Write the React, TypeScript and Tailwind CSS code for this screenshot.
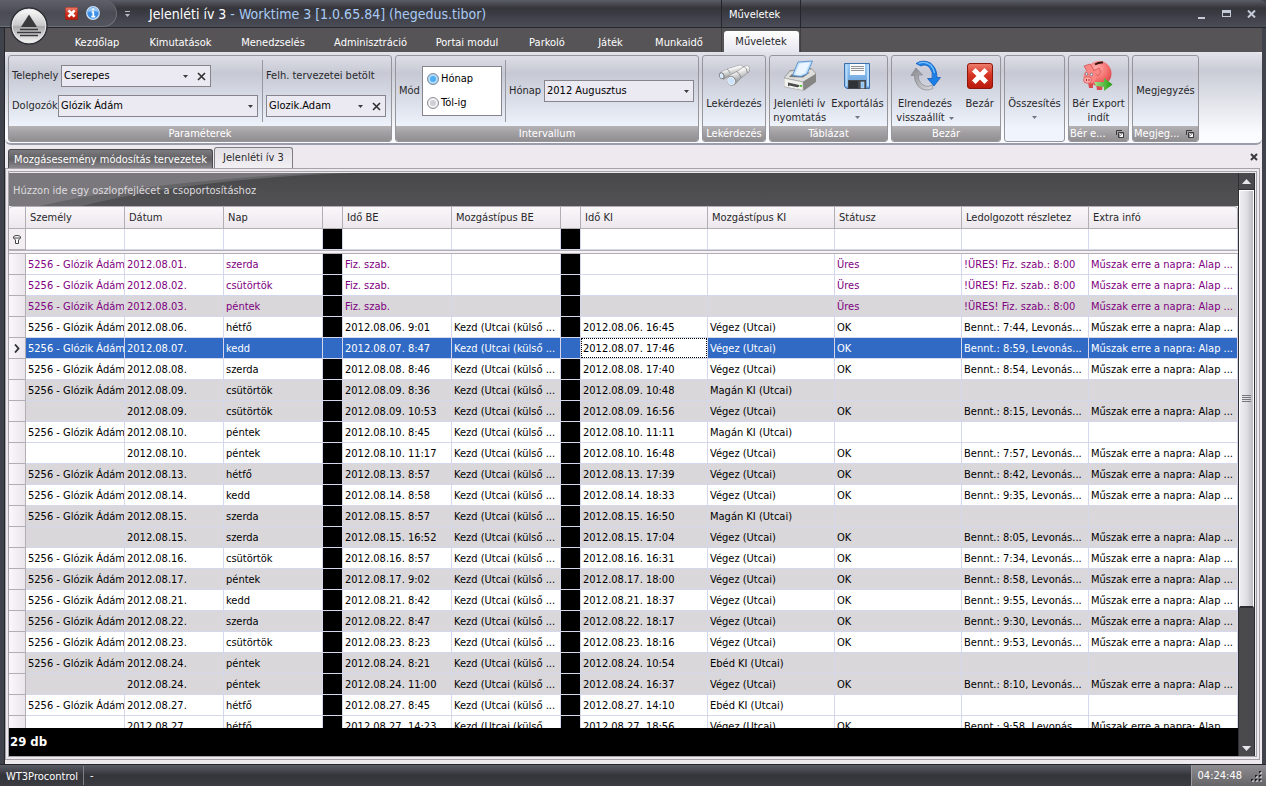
import React, { useState } from "react";
import clsx from "clsx";

type Row = {
  person?: string;
  date: string;
  day: string;
  inTime: string;
  inType?: string;
  outTime?: string;
  outType?: string;
  status?: string;
  worked?: string;
  extra?: string;
  shaded?: boolean;
  empty?: boolean;
};

const person = "5256 - Glózik Ádám";
const kezd = "Kezd (Utcai (külső ...";
const vegez = "Végez (Utcai)";
const muszak = "Műszak erre a napra: Alap ...";

const emptyRow = (date: string, day: string, shaded = false): Row => ({
  person,
  date,
  day,
  inTime: "Fiz. szab.",
  status: "Üres",
  worked: "!ÜRES! Fiz. szab.: 8:00",
  extra: muszak,
  shaded,
  empty: true,
});

const workRow = (
  date: string,
  day: string,
  start: string,
  end: string,
  worked: string,
  shaded = false,
  name = person
): Row => ({
  person: name,
  date,
  day,
  inTime: `${date} ${start}`,
  inType: kezd,
  outTime: `${date} ${end}`,
  outType: vegez,
  status: "OK",
  worked: `Bennt.: ${worked}, Levonás...`,
  extra: muszak,
  shaded,
});

const breakRow = (
  date: string,
  day: string,
  start: string,
  end: string,
  outType: string,
  shaded = false
): Row => ({
  person,
  date,
  day,
  inTime: `${date} ${start}`,
  inType: kezd,
  outTime: `${date} ${end}`,
  outType,
  shaded,
});

const rows: Row[] = [
  emptyRow("2012.08.01.", "szerda"),
  emptyRow("2012.08.02.", "csütörtök"),
  emptyRow("2012.08.03.", "péntek", true),
  workRow("2012.08.06.", "hétfő", "9:01", "16:45", "7:44"),
  workRow("2012.08.07.", "kedd", "8:47", "17:46", "8:59"),
  workRow("2012.08.08.", "szerda", "8:46", "17:40", "8:54"),
  breakRow("2012.08.09.", "csütörtök", "8:36", "10:48", "Magán KI (Utcai)", true),
  workRow("2012.08.09.", "csütörtök", "10:53", "16:56", "8:15", true, ""),
  breakRow("2012.08.10.", "péntek", "8:45", "11:11", "Magán KI (Utcai)"),
  workRow("2012.08.10.", "péntek", "11:17", "16:48", "7:57", false, ""),
  workRow("2012.08.13.", "hétfő", "8:57", "17:39", "8:42", true),
  workRow("2012.08.14.", "kedd", "8:58", "18:33", "9:35"),
  breakRow("2012.08.15.", "szerda", "8:57", "16:50", "Magán KI (Utcai)", true),
  workRow("2012.08.15.", "szerda", "16:52", "17:04", "8:05", true, ""),
  workRow("2012.08.16.", "csütörtök", "8:57", "16:31", "7:34"),
  workRow("2012.08.17.", "péntek", "9:02", "18:00", "8:58", true),
  workRow("2012.08.21.", "kedd", "8:42", "18:37", "9:55"),
  workRow("2012.08.22.", "szerda", "8:47", "18:17", "9:30", true),
  workRow("2012.08.23.", "csütörtök", "8:23", "18:16", "9:53"),
  breakRow("2012.08.24.", "péntek", "8:21", "10:54", "Ebéd KI (Utcai)", true),
  workRow("2012.08.24.", "péntek", "11:00", "16:37", "8:10", true, ""),
  breakRow("2012.08.27.", "hétfő", "8:45", "14:10", "Ebéd KI (Utcai)"),
  workRow("2012.08.27.", "hétfő", "14:23", "18:56", "9:58", false, ""),
];

const columns = [
  { key: "person", label: "Személy", width: "w-[99px]" },
  { key: "date", label: "Dátum", width: "w-[99px]" },
  { key: "day", label: "Nap", width: "w-[99px]" },
  { key: "gap1", label: "", width: "w-5" },
  { key: "inTime", label: "Idő BE", width: "w-[109px]" },
  { key: "inType", label: "Mozgástípus BE", width: "w-[109px]" },
  { key: "gap2", label: "", width: "w-5" },
  { key: "outTime", label: "Idő KI", width: "w-[127px]" },
  { key: "outType", label: "Mozgástípus KI", width: "w-[127px]" },
  { key: "status", label: "Státusz", width: "w-[127px]" },
  { key: "worked", label: "Ledolgozott részletez", width: "w-[127px]" },
  { key: "extra", label: "Extra infó", width: "" },
];

const menu = [
  { label: "Kezdőlap", width: "w-[76px]" },
  { label: "Kimutatások", width: "w-[91px]" },
  { label: "Menedzselés", width: "w-[94px]" },
  { label: "Adminisztráció", width: "w-[101px]" },
  { label: "Portai modul", width: "w-[92px]" },
  { label: "Parkoló", width: "w-[68px]" },
  { label: "Játék", width: "w-[59px]" },
  { label: "Munkaidő", width: "w-[78px]" },
];

const Caret = ({ className }: { className?: string }) => (
  <svg className={className} width="5" height="3" viewBox="0 0 5 3" aria-hidden="true">
    <path d="M0 0h5L2.500 3z" fill="currentColor" />
  </svg>
);

const Cross = ({ size = 9 }: { size?: number }) => (
  <svg width={size} height={size} viewBox="0 0 9 9" aria-hidden="true">
    <path d="M1 1l7 7M8 1L1 8" stroke="currentColor" strokeWidth="1.600" />
  </svg>
);

const RedCross = ({ size }: { size: number }) => (
  <svg width={size} height={size} viewBox="0 0 26 26" aria-hidden="true">
    <defs>
      <linearGradient id="red" x1="0" y1="0" x2="0" y2="1">
        <stop offset="0" stopColor="#ee8070" />
        <stop offset="0.450" stopColor="#d53522" />
        <stop offset="1" stopColor="#b91a0c" />
      </linearGradient>
    </defs>
    <rect x="0.500" y="0.500" width="25" height="25" rx="2.500" fill="url(#red)" stroke="#8e160c" />
    <path d="M8.500 8.500l9 9M17.500 8.500l-9 9" stroke="#fff" strokeWidth="5" strokeLinecap="square" />
  </svg>
);

const InfoIcon = () => (
  <svg width="14" height="14" viewBox="0 0 14 14" aria-hidden="true">
    <circle cx="7" cy="7" r="6.300" fill="#3d8fe6" stroke="#cfe4fa" strokeWidth="1.200" />
    <path d="M1.800 6a5.300 5.300 0 0 1 10.400 0q-5-2-10.400 0z" fill="#9ecbf7" />
    <path d="M5.500 6H7.300v4.500M5.300 10.700h4M6.300 3.300h1.800" stroke="#fff" strokeWidth="1.700" fill="none" />
  </svg>
);

const Orb = () => (
  <svg width="38" height="38" viewBox="0 0 38 38" aria-hidden="true">
    <defs>
      <linearGradient id="orb" x1="0" y1="0" x2="0" y2="1">
        <stop offset="0" stopColor="#ffffff" />
        <stop offset="0.480" stopColor="#c9c9cb" />
        <stop offset="0.520" stopColor="#a9a9ac" />
        <stop offset="1" stopColor="#fafafa" />
      </linearGradient>
    </defs>
    <circle cx="19" cy="19" r="18" fill="url(#orb)" stroke="#2f3036" strokeWidth="1.500" />
    <circle cx="19" cy="19" r="16.700" fill="none" stroke="#e9e9ea" />
    <path d="M19 7.500l8 12.500h-16z" fill="#3a3a3d" />
    <path d="M10 22.500h18M7 25.500h24M10 28.500h18" stroke="#3a3a3d" strokeWidth="1.300" />
  </svg>
);

const Binoculars = () => (
  <svg width="32" height="32" viewBox="0 0 32 32" aria-hidden="true">
    <defs>
      <linearGradient id="tube" x1="0" y1="0" x2="0.400" y2="1">
        <stop offset="0" stopColor="#a9a9aa" />
        <stop offset="0.350" stopColor="#ffffff" />
        <stop offset="0.650" stopColor="#c6c6c7" />
        <stop offset="1" stopColor="#757577" />
      </linearGradient>
    </defs>
    <path d="M2.500 12L12 8l10-3q2.500-.2 3 2l-1 3-11 4.500-7.500 5z" fill="url(#tube)" stroke="#8b8b8d" strokeWidth="0.500" />
    <path d="M11 15.500l9-4.500 7.500-5.300q3.500-.5 4.300 2.300l-.4 3.500-8.400 6.500-6.500 6.800z" fill="url(#tube)" stroke="#808082" strokeWidth="0.500" />
    <path d="M18.500 11.500q3.500 1.500 4.500 6.500M26 6.500q3 1.500 3.500 6.500M9 9q2 1 3 4" stroke="#828284" strokeWidth="0.800" fill="none" />
    <ellipse cx="13.500" cy="20.800" rx="4.400" ry="5" transform="rotate(-20 13.500 20.800)" fill="#85888c" />
    <ellipse cx="13.200" cy="21" rx="3.400" ry="4" transform="rotate(-20 13.200 21)" fill="#cbe4fb" stroke="#fff" strokeWidth="0.700" />
    <ellipse cx="3.700" cy="15.700" rx="2.700" ry="3.500" transform="rotate(-20 3.700 15.700)" fill="#7c7f83" />
    <ellipse cx="3.600" cy="15.800" rx="1.800" ry="2.500" transform="rotate(-20 3.600 15.800)" fill="#d9ecfd" />
  </svg>
);

const Printer = () => (
  <svg width="32" height="32" viewBox="0 0 32 32" aria-hidden="true">
    <path d="M0 18l6-8 21-2 5 6v8l-12 8.500L0 26z" fill="#9b9b9a" />
    <path d="M0 18l6-7 22-2 4 5-13 8z" fill="#dededc" stroke="#8c8c8b" strokeWidth="0.600" />
    <path d="M0 18l19 4v8.500L1 27q-1-.5-1-1z" fill="#f0f0ee" stroke="#a0a09f" strokeWidth="0.600" />
    <path d="M19 22l13-8v7.500l-12 9z" fill="#858584" />
    <path d="M5 17l3-3 18-1.500-7 5z" fill="#77777a" />
    <path d="M8.500 15.500L14 2l14.500-1-5.500 13-6 2.500z" fill="#bfe0fd" stroke="#4b83c6" strokeWidth="0.800" />
    <path d="M11 14.500l4.500-11L26 2.500l-5 10.500-5 2z" fill="#eaf5ff" />
    <path d="M4 22.500l11 2.500v3.500L4 26z" fill="#4b4b4b" />
    <path d="M5 26l9 2 2-1.500" stroke="#fff" strokeWidth="1.200" fill="none" />
    <rect x="15.500" y="25" width="2.500" height="1.800" fill="#55c32f" />
  </svg>
);

const Floppy = () => (
  <svg width="32" height="32" viewBox="0 0 32 32" aria-hidden="true">
    <defs>
      <linearGradient id="disk" x1="0" y1="0" x2="0" y2="1">
        <stop offset="0" stopColor="#9accf5" />
        <stop offset="1" stopColor="#6299d6" />
      </linearGradient>
    </defs>
    <path d="M3.500 3.500h25v25H5.500l-2-2z" fill="url(#disk)" stroke="#3f6fa8" />
    <path d="M4.500 4.500h2v22h-2zM26 4.500h2v22h-2z" fill="#b5dafa" />
    <rect x="9" y="4" width="15" height="11" fill="#f9fafb" />
    <path d="M10 6.500h13M10 8.500h13M10 10.500h13" stroke="#77777a" strokeWidth="0.800" />
    <rect x="7" y="20" width="18" height="9" fill="#45484e" />
    <rect x="8" y="21" width="9" height="7" fill="#2f3237" />
    <rect x="20" y="22" width="3" height="6" fill="#8bc2f5" stroke="#c8e3fb" strokeWidth="0.600" />
  </svg>
);

const Refresh = () => (
  <svg width="32" height="32" viewBox="0 0 32 32" aria-hidden="true">
    <defs>
      <linearGradient id="grayArrow" x1="0" y1="0" x2="1" y2="1">
        <stop offset="0" stopColor="#83868c" />
        <stop offset="1" stopColor="#dcdde0" />
      </linearGradient>
    </defs>
    <path d="M24 28.500Q15 32.500 9 26 5 21 5.500 15.500H2L7 8l6.500 7H9.500q-.5 6 4 9.500 5 3.500 9.500.500z" fill="url(#grayArrow)" stroke="#7d8086" strokeWidth="0.600" />
    <path d="M7 3.500Q14-1 21.500 3q6.500 5 6.500 14.500h3.500L25 26l-6.500-7.500H23q1.500-6.500-2.500-11-4-4-8.500-1.500z" fill="#1c7fe8" stroke="#0b55b5" strokeWidth="0.700" />
    <path d="M9.500 3.500q6.500-3 12 1.500 3.500 3.500 4 8" stroke="#7cc3ff" strokeWidth="1.300" fill="none" />
  </svg>
);

const Piggy = () => (
  <svg width="32" height="32" viewBox="0 0 32 32" aria-hidden="true">
    <defs>
      <radialGradient id="pig" cx="0.400" cy="0.300" r="0.800">
        <stop offset="0" stopColor="#ffb0ae" />
        <stop offset="0.600" stopColor="#f26a69" />
        <stop offset="1" stopColor="#cf3a3c" />
      </radialGradient>
      <linearGradient id="go" x1="0" y1="0" x2="1" y2="0">
        <stop offset="0" stopColor="#a5e08b" />
        <stop offset="1" stopColor="#1b9e0a" />
      </linearGradient>
    </defs>
    <path d="M6 22h5v6H7zM14 24h7l-1 6h-5zM23 22h5l-1 5h-3z" fill="#d84b4c" />
    <ellipse cx="17" cy="13.500" rx="12.500" ry="12.500" fill="url(#pig)" />
    <path d="M2 6l6-2 4 6-6 3zM11 11l6-3 2 4-3 4z" fill="#f88684" stroke="#d14a4b" strokeWidth="0.700" />
    <ellipse cx="8" cy="16.500" rx="6.500" ry="7" fill="#fb8684" />
    <ellipse cx="5.500" cy="20" rx="4" ry="3.300" fill="#ffaaa8" stroke="#d14a4b" strokeWidth="0.700" />
    <path d="M4.500 19v2M7 19v2" stroke="#b02c30" />
    <circle cx="4.500" cy="14" r="1.300" fill="#e8f1fa" stroke="#4b5566" strokeWidth="0.600" />
    <circle cx="9.500" cy="14.500" r="1.300" fill="#e8f1fa" stroke="#4b5566" strokeWidth="0.600" />
    <path d="M13 4.500q4-2.500 8-2" stroke="#3a1513" strokeWidth="2" fill="none" />
    <path d="M12 22h10v-4l8.500 6.500L22 31v-4l-8-1z" fill="url(#go)" />
  </svg>
);

const FunnelIcon = () => (
  <svg width="8" height="9" viewBox="0 0 8 9" aria-hidden="true">
    <path d="M0.500 2q0-1.500 3.500-1.500T7.500 2v1L5.500 5v3.500h-3V5L0.500 3z" fill="#fff" stroke="#444" />
    <path d="M1 3h6" stroke="#444" />
  </svg>
);

const LauncherIcon = () => (
  <svg width="8" height="8" viewBox="0 0 8 8" aria-hidden="true">
    <path d="M0.500 5V0.500H6M2.500 7V2.500H7.500V7.500H2.500z" fill="none" stroke="#3a3a3c" />
    <path d="M3.500 3.500L6.500 6.500M6.500 4v2.500H4" stroke="#fff" fill="none" />
  </svg>
);

type ComboProps = {
  id: string;
  value: string;
  width: string;
  clearable?: boolean;
};

const Combo = ({ id, value, width, clearable }: ComboProps) => (
  <div className={clsx("flex h-[22px] items-center border border-[#87858b] bg-[#ebe9f1] text-black", width)}>
    <div className="grid h-full min-w-0 flex-1 items-center">
      <select
        id={id}
        className="col-start-1 row-start-1 h-full w-full appearance-none bg-transparent pl-[2px] outline-none"
      >
        <option>{value}</option>
      </select>
      <Caret className="pointer-events-none col-start-1 row-start-1 mr-1 justify-self-end text-[#3c3c3e]" />
    </div>
    {clearable && (
      <button type="button" aria-label="Törlés" className="flex h-full w-[18px] items-center justify-center text-[#2f2f31]">
        <Cross />
      </button>
    )}
  </div>
);

type GroupProps = {
  title?: string;
  width: string;
  launcher?: boolean;
  children: React.ReactNode;
};

const Group = ({ title, width, launcher, children }: GroupProps) => (
  <section
    className={clsx(
      "flex h-[87px] shrink-0 flex-col overflow-hidden rounded-[3px] border border-[#97959c] bg-linear-to-b from-[#dddde6] from-0% via-[#c6c9d4] via-20% to-[#eff4fd] to-85%",
      width
    )}
  >
    <div className="flex flex-1 justify-center">{children}</div>
    {title && (
      <div
        className={clsx(
          "flex h-[15px] items-center bg-linear-to-b from-[#b5b2b6] via-[#a19ea2] to-[#918e92] pt-px whitespace-nowrap text-white",
          launcher ? "justify-between pr-1 pl-px" : "justify-center"
        )}
      >
        <span>{title}</span>
        {launcher && (
          <button type="button" aria-label={`${title} beállítások`}>
            <LauncherIcon />
          </button>
        )}
      </div>
    )}
  </section>
);

type BigButtonProps = {
  icon?: React.ReactNode;
  lines: string[];
  caret?: boolean;
  inlineCaret?: boolean;
};

const BigButton = ({ icon, lines, caret, inlineCaret }: BigButtonProps) => (
  <button type="button" className="flex flex-col items-center px-px pt-1 leading-[14px] whitespace-nowrap">
    <span className="flex h-8 w-8 items-center justify-center">{icon}</span>
    <span className="mt-[5px] flex flex-col items-center">
      {lines.map((line, i) => (
        <span key={line} className="flex items-center gap-1">
          {line}
          {inlineCaret && i === lines.length - 1 && <Caret className="text-[#6f7686]" />}
        </span>
      ))}
    </span>
    {caret && <Caret className="mt-[5px] text-[#6f7686]" />}
  </button>
);

const Separator = () => <div className="mt-1 h-[62px] w-px bg-[#97989f]" />;

const TitleBar = () => (
  <header className="flex h-7 shrink-0 items-stretch rounded-t-md border-b border-[#25262b] bg-linear-to-b from-[#5b5d67] via-[#35353b] via-30% to-[#4b4d57]">
    <div className="flex w-[117px] items-center gap-2 rounded-r-2xl border-r border-b border-[#6d6f79] bg-linear-to-b from-[#5f606a] via-[#4a4b53] to-[#54565f] pl-[65px]">
      <button type="button" aria-label="Bezárás">
        <RedCross size={13} />
      </button>
      <button type="button" aria-label="Információ">
        <InfoIcon />
      </button>
    </div>
    <button type="button" aria-label="Gyorselérés testreszabása" className="ml-2 flex flex-col items-center justify-center gap-[2px] text-[#b9bbc3]">
      <span className="h-px w-[5px] bg-[#b9bbc3]" />
      <Caret />
    </button>
    <h1 className="ml-[19px] w-[572px] text-[14px] leading-7 whitespace-nowrap text-[#a9cbf5]">
      <span className="text-white">Jelenléti ív 3</span> - Worktime 3 [1.0.65.84] (hegedus.tibor)
    </h1>
    <div className="w-20 border-x border-[#25262b] pl-[7px] leading-[30px] text-white">Műveletek</div>
    <div className="ml-auto flex items-center gap-[9px] pr-[7px] text-[#c5cbd8]">
      <button type="button" aria-label="Kis méret" className="flex h-3 w-4 items-end justify-center pb-px">
        <span className="h-[2px] w-[7px] bg-[#c5cbd8]" />
      </button>
      <button type="button" aria-label="Teljes méret" className="flex w-4 justify-center">
        <span className="h-[7px] w-[9px] border border-t-[3px] border-[#c5cbd8]" />
      </button>
      <button type="button" aria-label="Ablak bezárása" className="flex w-4 justify-center">
        <svg width="9" height="8" viewBox="0 0 9 8" aria-hidden="true">
          <path d="M1 0.500l7 7M8 0.500l-7 7" stroke="currentColor" strokeWidth="2" />
        </svg>
      </button>
    </div>
  </header>
);

const MenuBar = () => (
  <nav className="flex h-6 shrink-0 items-stretch bg-[#565457] pl-[54px] text-white">
    {menu.map((item) => (
      <button key={item.label} type="button" className={clsx("pt-[5px] text-center", item.width)}>
        {item.label}
      </button>
    ))}
    <div className="ml-[3px] flex w-20 justify-center border-x border-[#3f3e41]">
      <button
        type="button"
        className="mt-[3px] w-[75px] rounded-t-[3px] bg-linear-to-b from-white to-[#e6e6ef] text-[#28282a]"
      >
        Műveletek
      </button>
    </div>
  </nav>
);

const Ribbon = () => {
  const [mode, setMode] = useState("honap");

  return (
    <div className="flex h-[93px] shrink-0 items-start gap-[3px] overflow-hidden rounded-md border-b-2 border-[#9a9da9] bg-linear-to-b from-[#e3e3ec] from-0% via-[#c9ccd6] via-20% to-[#fbfcff] to-90% px-[3px] pt-[3px]">
      <Group title="Paraméterek" width="w-[384px]">
        <div className="flex flex-1 gap-[3px] px-[3px]">
          <div className="flex flex-1 flex-col gap-2 pt-[9px]">
            <div className="flex items-center">
              <label htmlFor="telephely" className="w-[49px]">Telephely</label>
              <Combo id="telephely" value="Cserepes" width="w-[150px]" clearable />
            </div>
            <div className="flex items-center">
              <label htmlFor="dolgozok" className="w-[46px] whitespace-nowrap">Dolgozók</label>
              <Combo id="dolgozok" value="Glózik Ádám" width="w-[200px]" />
            </div>
          </div>
          <Separator />
          <div className="flex w-[122px] flex-col gap-2 pt-[9px]">
            <label htmlFor="felh" className="h-[22px] leading-[22px] whitespace-nowrap">Felh. tervezetei betölt</label>
            <Combo id="felh" value="Glozik.Adam" width="w-[120px]" clearable />
          </div>
        </div>
      </Group>
      <Group title="Intervallum" width="w-[304px]">
        <div className="flex flex-1 items-start gap-[3px] pl-[3px]">
          <span className="w-5 pt-[28px]">Mód</span>
          <fieldset className="mt-[10px] flex h-[50px] w-20 flex-col justify-around border border-[#87858b] bg-white pl-1 text-black">
            {[
              { id: "honap", label: "Hónap" },
              { id: "tolig", label: "Tól-ig" },
            ].map((option) => (
              <label key={option.id} className="flex items-center gap-[2px]">
                <input
                  type="radio"
                  name="mode"
                  checked={mode === option.id}
                  onChange={() => setMode(option.id)}
                  className="h-3 w-3 appearance-none rounded-full border border-[#8f9096] bg-[#d0d0d4] ring-2 ring-[#f2f2f4] ring-inset checked:bg-[#4fb0f5] checked:ring-[#b9dcf8]"
                />
                {option.label}
              </label>
            ))}
          </fieldset>
          <Separator />
          <label htmlFor="honapvalaszto" className="w-8 pt-[28px] whitespace-nowrap">Hónap</label>
          <div className="pt-6">
            <Combo id="honapvalaszto" value="2012 Augusztus" width="w-[150px]" />
          </div>
        </div>
      </Group>
      <Group title="Lekérdezés" width="w-16">
        <BigButton icon={<Binoculars />} lines={["Lekérdezés"]} />
      </Group>
      <Group title="Táblázat" width="w-[119px]">
        <div className="flex gap-[3px]">
          <BigButton icon={<Printer />} lines={["Jelenléti ív", "nyomtatás"]} />
          <BigButton icon={<Floppy />} lines={["Exportálás"]} caret />
        </div>
      </Group>
      <Group title="Bezár" width="w-[110px]">
        <div className="flex gap-2">
          <BigButton icon={<Refresh />} lines={["Elrendezés", "visszaállít"]} inlineCaret />
          <BigButton icon={<RedCross size={26} />} lines={["Bezár"]} />
        </div>
      </Group>
      <Group width="w-[61px]">
        <BigButton lines={["Összesítés"]} caret />
      </Group>
      <Group title="Bér e..." width="w-[61px]" launcher>
        <BigButton icon={<Piggy />} lines={["Bér Export", "indít"]} />
      </Group>
      <Group title="Megjeg..." width="w-[67px]" launcher>
        <button type="button">Megjegyzés</button>
      </Group>
    </div>
  );
};

const DocumentTabs = () => (
  <div className="flex h-[23px] shrink-0 items-end pt-[2px] pl-[3px]">
    <button
      type="button"
      className="h-[19px] w-[205px] rounded-t-[3px] border border-b-0 border-[#4b4a4d] bg-linear-to-b from-[#7d7b7f] via-[#605f62] to-[#8a888c] pt-px whitespace-nowrap text-white"
    >
      Mozgásesemény módosítás tervezetek
    </button>
    <button
      type="button"
      className="ml-px h-[21px] w-[79px] rounded-t-[3px] border border-b-0 border-[#7f7d82] bg-linear-to-b from-[#e2dfe5] to-[#f3f0f4] text-[#28282a]"
    >
      Jelenléti ív 3
    </button>
    <button type="button" aria-label="Lap bezárása" className="mr-1 mb-[7px] ml-auto text-[#3a3a3c]">
      <svg width="8" height="8" viewBox="0 0 8 8" aria-hidden="true">
        <path d="M1 1l6 6M7 1L1 7" stroke="currentColor" strokeWidth="2" />
      </svg>
    </button>
  </div>
);

const GroupPanel = () => (
  <div className="relative h-[33px] shrink-0 overflow-hidden bg-linear-to-b from-[#48484a] to-[#525154] text-[#dddbdf]">
    <svg className="absolute inset-y-0 left-0" width="400" height="33" viewBox="0 0 400 33" aria-hidden="true">
      <path d="M0 0h345Q190 5 72 33H0z" fill="#656467" />
      <path d="M0 0h310Q140 8 30 33H0z" fill="#7a787c" />
    </svg>
    <p className="relative pl-1 leading-[35px]">Húzzon ide egy oszlopfejlécet a csoportosításhoz</p>
  </div>
);

const isGap = (key: string) => key === "gap1" || key === "gap2";

const Grid = () => {
  const [selected, setSelected] = useState(4);

  return (
    <table className="w-full table-fixed border-separate border-spacing-0 whitespace-nowrap">
      <colgroup>
        <col className="w-[17px]" />
        {columns.map((c) => (
          <col key={c.key} className={c.width} />
        ))}
      </colgroup>
      <thead>
        <tr className="h-[23px] bg-linear-to-b from-[#fbf8fb] to-[#ebe7ec]">
          <th className="rounded-tl border-t border-r border-b border-[#b3aeb4]" aria-label="Jelölő" />
          {columns.map((c) => (
            <th
              key={c.key}
              className="overflow-hidden border-t border-r border-b border-[#b3aeb4] p-0 pt-px pl-1 text-left font-normal text-[#28282a] last:rounded-tr"
            >
              {c.label}
            </th>
          ))}
        </tr>
        <tr className="h-[21px] bg-white">
          <td className="border-r border-b border-[#b3aeb4] bg-[#f2eef2] p-0">
            <div className="flex justify-center">
              <FunnelIcon />
            </div>
          </td>
          {columns.map((c) => (
            <td
              key={c.key}
              className={clsx("border-r border-b border-[#d5d8ec] p-0", isGap(c.key) && "bg-black")}
            >
              {!isGap(c.key) && (
                <input aria-label={`${c.label} szűrő`} className="block h-5 w-full px-[3px] outline-none" />
              )}
            </td>
          ))}
        </tr>
        <tr className="h-1">
          <td colSpan={13} className="border-y border-[#b3aeb4] bg-[#f5f2f5] p-0" />
        </tr>
      </thead>
      <tbody>
        {rows.map((row, i) => {
          const active = i === selected;
          return (
            <tr
              key={i}
              onClick={() => setSelected(i)}
              className={clsx(
                "h-[21px]",
                active ? "bg-[#316ac5] text-white" : row.shaded ? "bg-[#d9d7da]" : "bg-white",
                !active && (row.empty ? "text-[#800080]" : "text-black")
              )}
            >
              <td className="border-r border-b border-[#b3aeb4] bg-linear-to-r from-[#faf7fa] to-[#eae6eb] p-0">
                {active && (
                  <svg className="mx-auto block" width="6" height="9" viewBox="0 0 6 9" aria-hidden="true">
                    <path d="M1 0.500l3.500 4L1 8.500" stroke="#2f2f31" strokeWidth="1.800" fill="none" />
                  </svg>
                )}
              </td>
              {columns.map((c) => {
                const focused = active && c.key === "outTime";
                return (
                  <td
                    key={c.key}
                    className={clsx(
                      "overflow-hidden border-r border-b border-[#d5d8ec] p-0",
                      isGap(c.key) && !active && "bg-black"
                    )}
                  >
                    <div
                      className={clsx(
                        "h-5",
                        focused
                          ? "border border-dotted border-black bg-white pl-px leading-5 text-black"
                          : "pl-[2px] leading-[22px]"
                      )}
                    >
                      {row[c.key as keyof Row]}
                    </div>
                  </td>
                );
              })}
            </tr>
          );
        })}
      </tbody>
    </table>
  );
};

const ScrollBar = () => (
  <div className="flex w-[17px] shrink-0 flex-col border-x border-[#2f2f33] bg-[#4a494c]">
    <button type="button" aria-label="Fel" className="flex h-[17px] items-center justify-center border-b border-[#2f2f33]">
      <svg width="9" height="5" viewBox="0 0 9 5" aria-hidden="true">
        <path d="M4.500 0L9 5H0z" fill="#e6e6ea" />
      </svg>
    </button>
    <div className="flex-1">
      <div className="flex h-[76%] flex-col items-center justify-center gap-px border border-b-2 border-white border-b-[#2f2f33] bg-linear-to-r from-[#efeff2] via-[#e0dfe4] via-50% to-[#bdbcc4]">
        <span className="h-px w-[9px] bg-[#77767c]" />
        <span className="h-px w-[9px] bg-[#77767c]" />
        <span className="h-px w-[9px] bg-[#77767c]" />
        <span className="h-px w-[9px] bg-[#77767c]" />
      </div>
    </div>
    <button type="button" aria-label="Le" className="flex h-4 items-center justify-center">
      <svg width="9" height="5" viewBox="0 0 9 5" aria-hidden="true">
        <path d="M0 0h9L4.500 5z" fill="#e6e6ea" />
      </svg>
    </button>
  </div>
);

const StatusBar = () => (
  <footer className="flex h-[22px] shrink-0 items-stretch border-t border-[#25262b] bg-linear-to-b from-[#595b65] via-[#34353a] via-50% to-[#3b3c42] leading-[22px] text-white">
    <span className="my-px border-r border-[#7d7e86] pr-[5px] pl-[6px]">WT3Procontrol</span>
    <span className="pl-[6px]">-</span>
    <div className="ml-auto flex items-center gap-[9px] border-l border-[#9c9a9f] bg-linear-to-b from-[#8f8d91] to-[#656467] pr-1 pl-[6px]">
      <span>04:24:48</span>
      <svg className="self-end" width="11" height="15" viewBox="0 0 11 15" aria-hidden="true">
        <path d="M8 0h2v2H8zM4 4h2v2H4zM8 4h2v2H8zM0 8h2v2H0zM4 8h2v2H4zM8 8h2v2H8z" fill="#1d1d20" />
        <path d="M9 1h2v2H9zM5 5h2v2H5zM9 5h2v2H9zM1 9h2v2H1zM5 9h2v2H5zM9 9h2v2H9z" fill="#fff" fillOpacity="0.500" />
      </svg>
    </div>
  </footer>
);

export default function App() {
  return (
    <div className="relative flex h-screen flex-col overflow-hidden bg-[#41434c] font-['DejaVu_Sans_Condensed','Noto_Sans',sans-serif] text-[11px] leading-[14px] text-[#28282a]">
      <TitleBar />
      <button type="button" aria-label="Alkalmazás menü" className="absolute top-[7px] left-[10px]">
        <Orb />
      </button>
      <main className="mx-1 flex min-h-0 flex-1 flex-col border-l border-[#25262b] bg-[#ede9ee]">
        <MenuBar />
        <Ribbon />
        <DocumentTabs />
        <div className="mr-[2px] mb-1 flex min-h-0 flex-1 border border-[#a5a2a8] p-[2px]">
          <div className="flex min-h-0 min-w-0 flex-1 border border-[#a5a2a8] pt-px pr-px">
            <div className="flex min-w-0 flex-1 flex-col">
              <GroupPanel />
              <div className="min-h-0 flex-1 overflow-hidden bg-white">
                <Grid />
              </div>
              <div className="h-7 shrink-0 bg-black pl-px font-['DejaVu_Sans_Condensed',sans-serif] text-[13px] leading-7 font-bold text-white">
                29 db
              </div>
            </div>
            <ScrollBar />
          </div>
        </div>
      </main>
      <StatusBar />
    </div>
  );
}
